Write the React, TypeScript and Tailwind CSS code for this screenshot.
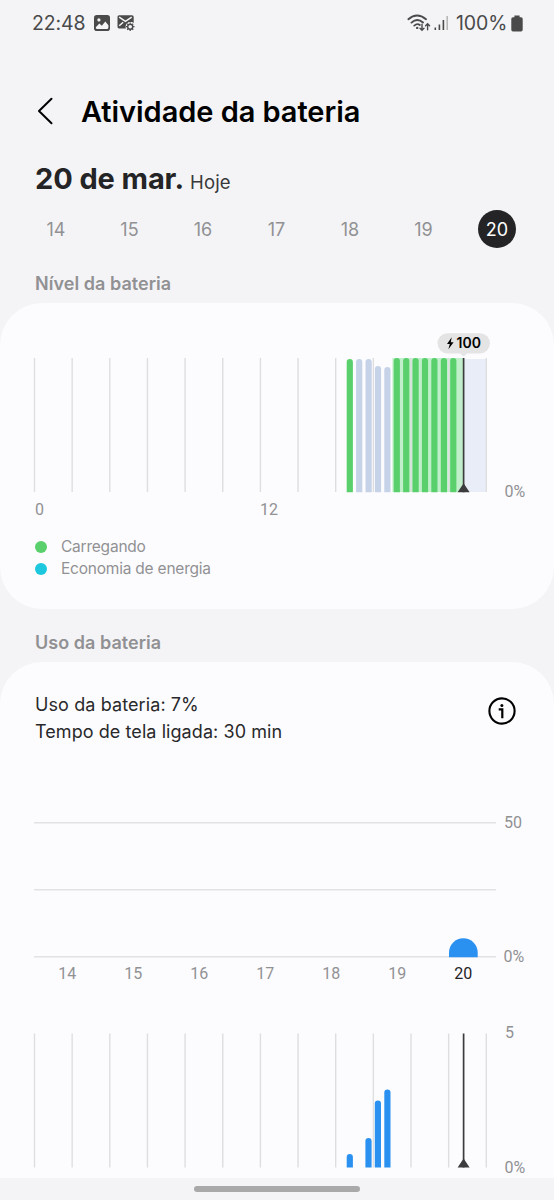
import type { ReactNode } from 'react';

const days = [14, 15, 16, 17, 18, 19, 20];

// One grid line every two hours, midnight to midnight
const gridLines = Array.from({ length: 13 }, (_, i) => 34.5 + i * 37.65);

const levelBars = [
  { x: 346.7, top: 33, fill: '#59d06c' },
  { x: 356.1, top: 33, fill: '#c5d2e7' },
  { x: 365.5, top: 33, fill: '#c5d2e7' },
  { x: 374.9, top: 40, fill: '#c5d2e7' },
  { x: 384.3, top: 41, fill: '#c5d2e7' },
  { x: 393.7, top: 32, fill: '#59d06c' },
  { x: 403.1, top: 32, fill: '#59d06c' },
  { x: 412.5, top: 32, fill: '#59d06c' },
  { x: 421.9, top: 32, fill: '#59d06c' },
  { x: 431.3, top: 32, fill: '#59d06c' },
  { x: 440.8, top: 32, fill: '#59d06c' },
  { x: 450.2, top: 32, fill: '#59d06c' },
];

const hourlyBars = [
  { x: 346.7, top: 144 },
  { x: 365.4, top: 128 },
  { x: 374.8, top: 90.5 },
  { x: 384.3, top: 79.5 },
];

function barPath(x: number, top: number, bottom: number) {
  return `M${x} ${bottom}V${top + 3.1}a3.1 3.1 0 0 1 6.2 0V${bottom}z`;
}

interface AxisLabelProps {
  x: number;
  y: number;
  children: ReactNode;
}

function AxisLabel({ x, y, children }: AxisLabelProps) {
  return (
    <text x={x} y={y} className="fill-[#919194] font-['Roboto',sans-serif] text-[16px]">
      {children}
    </text>
  );
}

function StatusBar() {
  return (
    <div className="flex h-[46px] shrink-0 items-center pl-8 pr-[31px] text-[#4a4a4b]">
      <span className="w-[54px] pt-px text-[19.5px] tracking-[-0.1px]">22:48</span>
      <svg className="ml-2 h-4 w-4" viewBox="0 0 16 16">
        <rect width="16" height="16" rx="2.8" fill="currentColor" />
        <circle cx="4.9" cy="4.9" r="1.6" fill="#f5f5f7" />
        <path d="M1.8 12.2l3.6-3.6 2.4 2.2 3.5-4.2 3.1 3.6v2.2q0 1.6-1.6 1.6H3.4q-1.6 0-1.6-1.6z" fill="#f5f5f7" />
      </svg>
      <svg className="ml-[7px] h-[18px] w-[18px]" viewBox="0 0 18 18" fill="none">
        <path d="M2 1.2h13a1.7 1.7 0 0 1 1.7 1.7v6.2A5 5 0 0 0 9 14.4H2A1.6 1.6 0 0 1 .5 12.8V2.8A1.6 1.6 0 0 1 2 1.2z" fill="currentColor" />
        <path d="M2.2 3.2l6.2 4.2 6.3-4.2M2.2 11.8l4-3.6" stroke="#f5f5f7" strokeWidth="1.5" />
        <circle cx="13.2" cy="12.7" r="4.6" fill="#f5f5f7" />
        <circle cx="13.2" cy="12.7" r="2.5" stroke="currentColor" strokeWidth="1.4" />
        <path d="M13.2 8.4v1.4M13.2 15.6V17M8.9 12.7h1.4M16.1 12.7h1.4M10.2 9.7l.9.9M15.3 14.8l.9.9M10.2 15.7l.9-.9M15.3 10.6l.9-.9" stroke="currentColor" strokeWidth="1.3" />
      </svg>

      <svg className="ml-auto h-[18px] w-6" viewBox="0 0 24 18" fill="none" stroke="currentColor" strokeLinecap="round">
        <path d="M1.4 5.2Q10 -2.2 19 5.2M4.5 8.6Q10.2 3.6 16 8.5M7.3 11.6Q10.2 9 12.8 11" strokeWidth="1.9" />
        <circle cx="10.2" cy="13.9" r="1.2" fill="currentColor" stroke="none" />
        <path d="M15 10.2v6M13 14.2l2 2 2-2M20.6 15.8v-6M18.6 11.8l2-2 2 2" strokeWidth="1.4" />
      </svg>
      <svg className="ml-[3px] h-4 w-[15px]" viewBox="0 0 15 16" stroke="currentColor" strokeWidth="1.6">
        <path d="M1.3 12.5V15M5.4 9.5V15M9.4 5V15" />
        <path d="M13.2 1V15" opacity="0.35" />
      </svg>
      <span className="ml-[7px] w-[52px] pt-px text-[19.5px] tracking-[-0.1px]">100%</span>
      <svg className="ml-[3px] h-[17px] w-[12px]" viewBox="0 0 12 17" fill="currentColor">
        <path d="M3.4.4h5.2v1.8H10A1.7 1.7 0 0 1 11.7 4v10.8a1.7 1.7 0 0 1-1.7 1.7H2A1.7 1.7 0 0 1 .3 14.8V4A1.7 1.7 0 0 1 2 2.2h1.4z" />
      </svg>
    </div>
  );
}

function Header() {
  return (
    <header className="flex h-[130px] shrink-0 items-center pl-[37px]">
      <svg className="h-7 w-4" viewBox="0 0 16 28" fill="none" stroke="#000" strokeWidth="2" strokeLinecap="round" strokeLinejoin="round">
        <path d="M14.5 1.8L2 14l12.5 12.2" />
      </svg>
      <h1 className="ml-7 whitespace-nowrap pt-px text-[29px] font-semibold tracking-[-0.05px] text-black">
        Atividade da bateria
      </h1>
    </header>
  );
}

function DayPicker() {
  return (
    <div className="flex h-10 shrink-0 items-center justify-between pl-[37px] pr-[38px] text-[18px] text-[#919194]">
      {days.map((day) => (
        <button
          key={day}
          className={
            day === 20
              ? 'flex h-[38px] w-[38px] items-center justify-center rounded-full bg-[#242426] text-white'
              : 'flex h-[38px] w-[38px] items-center justify-center'
          }
        >
          {day}
        </button>
      ))}
    </div>
  );
}

function SectionTitle({ children }: { children: ReactNode }) {
  return (
    <h2 className="flex h-[53px] shrink-0 items-center pl-[35px] pt-[14px] text-[18px] font-semibold tracking-[0.04px] text-[#919194]">
      {children}
    </h2>
  );
}

function TimeMarker({ top, bottom }: { top: number; bottom: number }) {
  return (
    <>
      <path d={`M463.6 ${top}V${bottom}`} stroke="#3c3c3e" strokeWidth="1.7" />
      <path d={`M463.6 ${bottom - 9}l6 9h-12z`} fill="#3c3c3e" />
    </>
  );
}

function LevelChart() {
  return (
    <svg className="block h-[194px] w-full" viewBox="0 0 554 194">
      <rect x="392.4" y="32" width="71.2" height="134" fill="#c2efcb" />
      <rect x="463.6" y="33" width="22.4" height="133" fill="#e8edf7" />
      {gridLines.map((x) => (
        <path key={x} d={`M${x} 32V166`} stroke="#dedee1" strokeWidth="1.4" />
      ))}
      {levelBars.map((bar) => (
        <path key={bar.x} d={barPath(bar.x, bar.top, 166.3)} fill={bar.fill} />
      ))}
      <TimeMarker top={32} bottom={166.3} />

      <rect x="437.5" y="7.2" width="52.5" height="20.2" rx="10.1" fill="#e4e4e5" />
      <path d="M459.8 27.2l3.8 3.4 3.8-3.4z" fill="#e4e4e5" />
      <path d="M451.7 11.3l-4.7 6.6h2.8l-1.4 5.3 5.2-7h-2.8z" fill="#000" />
      <text x="456.5" y="22.3" className="fill-black text-[14px] font-semibold">
        100
      </text>

      <AxisLabel x={504.5} y={171}>0%</AxisLabel>
      <AxisLabel x={35} y={189}>0</AxisLabel>
      <AxisLabel x={260} y={189}>12</AxisLabel>
    </svg>
  );
}

function DailyChart() {
  return (
    <svg className="block h-[200px] w-full" viewBox="0 0 554 200">
      <path d="M34 22.8H496M34 89.8H496M34 156.8H496" stroke="#e2e2e5" strokeWidth="1.5" />
      <path d="M449 157.2V152.6a14.35 14.35 0 0 1 28.7 0V157.2z" fill="#2b91f1" />
      {days.map((day, i) => (
        <text
          key={day}
          x={67.3 + i * 66}
          y="179"
          textAnchor="middle"
          className={
            day === 20
              ? "fill-[#242426] font-['Roboto',sans-serif] text-[16px]"
              : "fill-[#919194] font-['Roboto',sans-serif] text-[16px]"
          }
        >
          {day}
        </text>
      ))}
      <AxisLabel x={504} y={27.5}>50</AxisLabel>
      <AxisLabel x={503.5} y={162}>0%</AxisLabel>
    </svg>
  );
}

function HourlyChart() {
  return (
    <svg className="block h-[178px] w-full" viewBox="0 0 554 178">
      {gridLines.map((x) => (
        <path key={x} d={`M${x} 23.5V157.5`} stroke="#dedee1" strokeWidth="1.4" />
      ))}
      {hourlyBars.map((bar) => (
        <path key={bar.x} d={barPath(bar.x, bar.top, 157.5)} fill="#2b91f1" />
      ))}
      <TimeMarker top={23.5} bottom={157.5} />
      <AxisLabel x={505} y={28}>5</AxisLabel>
      <AxisLabel x={504.5} y={162.5}>0%</AxisLabel>
    </svg>
  );
}

export default function App() {
  return (
    <main className="flex h-[1200px] w-[554px] flex-col overflow-hidden bg-[#f4f4f6] font-['Inter',sans-serif]">
      <StatusBar />
      <Header />

      <div className="-mt-[19px] flex h-[52px] shrink-0 items-baseline whitespace-nowrap pl-[35px] text-[#242426]">
        <span className="text-[29px] font-bold tracking-[-0.1px]">20 de mar.</span>
        <span className="ml-[6px] text-[18.5px] tracking-[0.1px] text-[#38383a]">Hoje</span>
      </div>
      <DayPicker />

      <div className="h-px shrink-0" />
      <SectionTitle>Nível da bateria</SectionTitle>
      <section className="h-[306px] shrink-0 rounded-[42px] bg-[#fcfcfe] pt-[23px]">
        <LevelChart />
        <ul className="mt-4 pl-[35px] text-[15.5px] leading-[22px] text-[#919194]">
          <li className="flex items-center gap-[14px]">
            <span className="h-3 w-3 rounded-full bg-[#59d06c]" />
            <span className="tracking-[-0.22px]">Carregando</span>
          </li>
          <li className="flex items-center gap-[14px]">
            <span className="h-3 w-3 rounded-full bg-[#1dc8df]" />
            <span className="tracking-[-0.22px]">Economia de energia</span>
          </li>
        </ul>
      </section>

      <SectionTitle>Uso da bateria</SectionTitle>
      <section className="h-[516px] shrink-0 rounded-t-[42px] bg-[#fcfcfe] pt-[29px]">
        <div className="flex h-[109px] items-start justify-between pl-[35px] pr-[38px]">
          <div className="text-[18px] leading-[27px] text-[#29292b]">
            <p className="tracking-[0.1px]">Uso da bateria: 7%</p>
            <p className="tracking-[0.07px]">Tempo de tela ligada: 30 min</p>
          </div>
          <svg className="mt-[6px] h-7 w-7" viewBox="0 0 28 28" fill="none" stroke="#000">
            <circle cx="14" cy="14" r="12.6" strokeWidth="2.1" />
            <circle cx="13.9" cy="8.4" r="1.5" fill="#000" stroke="none" />
            <path d="M10.7 12.3h3.6v9" strokeWidth="2.2" />
          </svg>
        </div>
        <DailyChart />
        <div className="mt-[10px]">
          <HourlyChart />
        </div>
      </section>

      <div className="flex h-[22px] shrink-0 justify-center bg-[#f4f4f6] pt-2">
        <div className="h-[6px] w-[166px] rounded-full bg-[#a9a9aa]" />
      </div>
    </main>
  );
}
